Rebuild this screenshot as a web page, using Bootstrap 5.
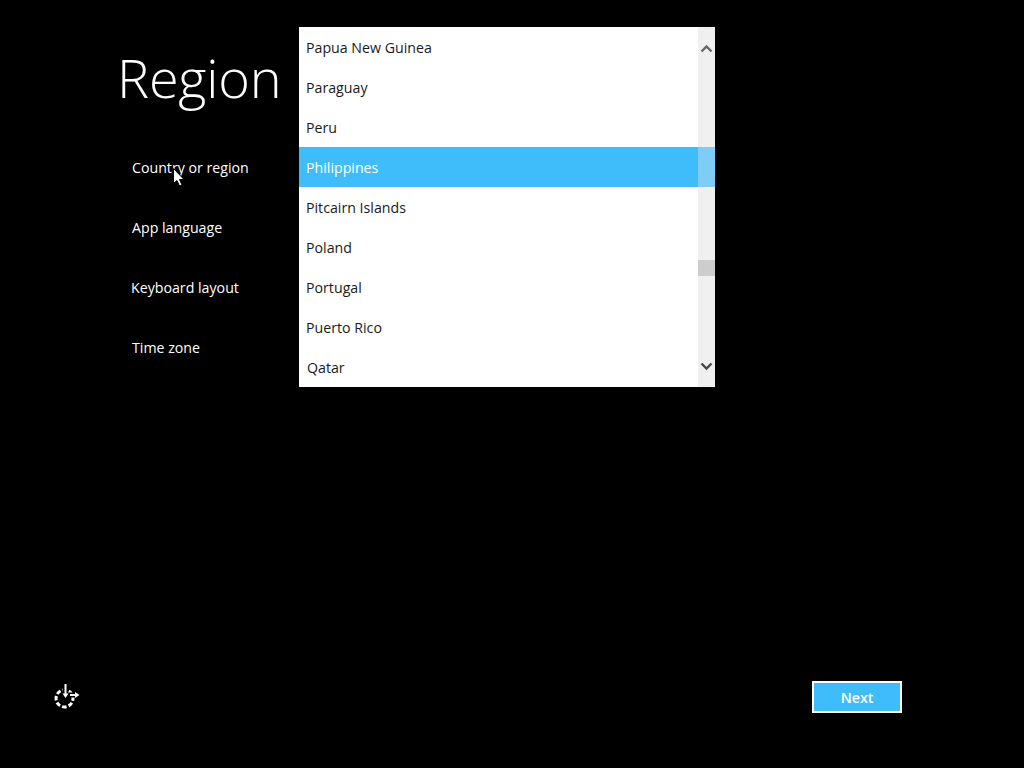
<!DOCTYPE html>
<html lang="en">
<head>
<meta charset="utf-8">
<title>Region</title>
<link href="https://cdn.jsdelivr.net/npm/bootstrap@5.3.0/dist/css/bootstrap.min.css" rel="stylesheet">
<style>
html,body{height:100%;background:#000;}
body{font-family:"Open Sans","Noto Sans","Liberation Sans",sans-serif;color:#fff;overflow:hidden;}
.setup-page{height:768px;position:relative;}
.setup-main{padding-top:27px;}
.setup-left{width:299px;flex:none;}
.setup-title{font-size:54px;font-weight:300;line-height:76px;margin:12px 0 0 117px;color:#fff;letter-spacing:-.2px;}
.setup-links{margin:23px 0 0 132px;padding:0;list-style:none;}
.setup-links li{height:60px;line-height:20px;padding-top:20px;font-size:14.2px;}
.setup-links li.nudge{margin-left:-1px;}
.picker{width:416px;height:360px;background:#fff;position:relative;}
.picker-rows{flex:1;border:0;border-radius:0;}
.picker-rows .list-group-item{height:40px;line-height:40px;margin:0;padding:1px 0 0 7px;border:0;border-radius:0;font-size:14.2px;color:#1a1a1a;background:#fff;}
.picker-rows .list-group-item.active{margin-top:0;background:#3fbdfb;color:#fff;}
.picker-rows .list-group-item.nudge{padding-left:8px;}
.scroll-track{width:17px;flex:none;background:#f0f0f0;position:relative;}
.scroll-hi{position:absolute;left:0;right:0;top:120px;height:40px;background:#7fcdf7;}
.scroll-thumb{position:absolute;left:0;right:0;top:233px;height:16px;background:#cdcdcd;}
.scroll-arrow{position:absolute;left:2px;width:13px;height:9px;}
.arrow-up{top:17px;}
.arrow-down{top:335px;}
.setup-foot{position:absolute;left:0;right:0;bottom:55px;height:32px;padding-left:53px;padding-right:122px;}
.next-btn{width:90px;height:32px;padding:1px 0 0;border:2px solid #fff;border-radius:0;background:#3fbdfb;color:#fff;font-size:14.2px;font-weight:600;line-height:26px;}
.next-btn:hover{background:#3fbdfb;color:#fff;border-color:#fff;}
.mouse-cursor{position:absolute;left:173px;top:168px;width:12px;height:19px;}
</style>
</head>
<body>
<div class="setup-page">
  <div class="setup-main d-flex">
    <div class="setup-left">
      <h1 class="setup-title">Region</h1>
      <ul class="setup-links">
        <li>Country or region</li>
        <li>App language</li>
        <li class="nudge">Keyboard layout</li>
        <li>Time zone</li>
      </ul>
    </div>
    <div class="picker d-flex">
      <div class="list-group picker-rows">
        <div class="list-group-item">Papua New Guinea</div>
        <div class="list-group-item">Paraguay</div>
        <div class="list-group-item">Peru</div>
        <div class="list-group-item active">Philippines</div>
        <div class="list-group-item">Pitcairn Islands</div>
        <div class="list-group-item">Poland</div>
        <div class="list-group-item">Portugal</div>
        <div class="list-group-item">Puerto Rico</div>
        <div class="list-group-item nudge">Qatar</div>
      </div>
      <div class="scroll-track">
        <div class="scroll-hi"></div>
        <div class="scroll-thumb"></div>
        <svg class="scroll-arrow arrow-up" viewBox="0 0 13 9"><path d="M1.500 7.500 6.500 2.500 11.500 7.500" fill="none" stroke="#686868" stroke-width="2.400"/></svg>
        <svg class="scroll-arrow arrow-down" viewBox="0 0 13 9"><path d="M1.500 1.500 6.500 6.500 11.500 1.500" fill="none" stroke="#484848" stroke-width="2.400"/></svg>
      </div>
    </div>
  </div>
  <div class="setup-foot d-flex align-items-center justify-content-between">
    <svg width="27" height="26" viewBox="0 0 27 26" fill="none" stroke="#fff">
      <circle cx="11.500" cy="14.500" r="8.500" stroke-width="3" stroke-dasharray="4.500 2.180" transform="rotate(-60 11.500 14.500)"/>
      <path d="M12.500 0v13" stroke="#000" stroke-width="5"/>
      <path d="M15 11h9" stroke="#000" stroke-width="5"/>
      <path d="M12.500 0v11" stroke-width="2"/>
      <path d="M9.500 9.500 12.500 14 15.500 9.500z" fill="#fff" stroke="none"/>
      <path d="M17 11h6" stroke-width="2"/>
      <path d="M22 8 26.500 11 22 14z" fill="#fff" stroke="none"/>
    </svg>
    <button type="button" class="btn next-btn">Next</button>
  </div>
  <svg class="mouse-cursor" viewBox="0 0 12 19"><path d="M.5.500V15.500L4 12.500 6.500 18 9 17 6.500 11.500H11z" fill="#fff" stroke="#000" stroke-width="1"/></svg>
</div>
<script src="https://cdn.jsdelivr.net/npm/bootstrap@5.3.0/dist/js/bootstrap.bundle.min.js"></script>
</body>
</html>
